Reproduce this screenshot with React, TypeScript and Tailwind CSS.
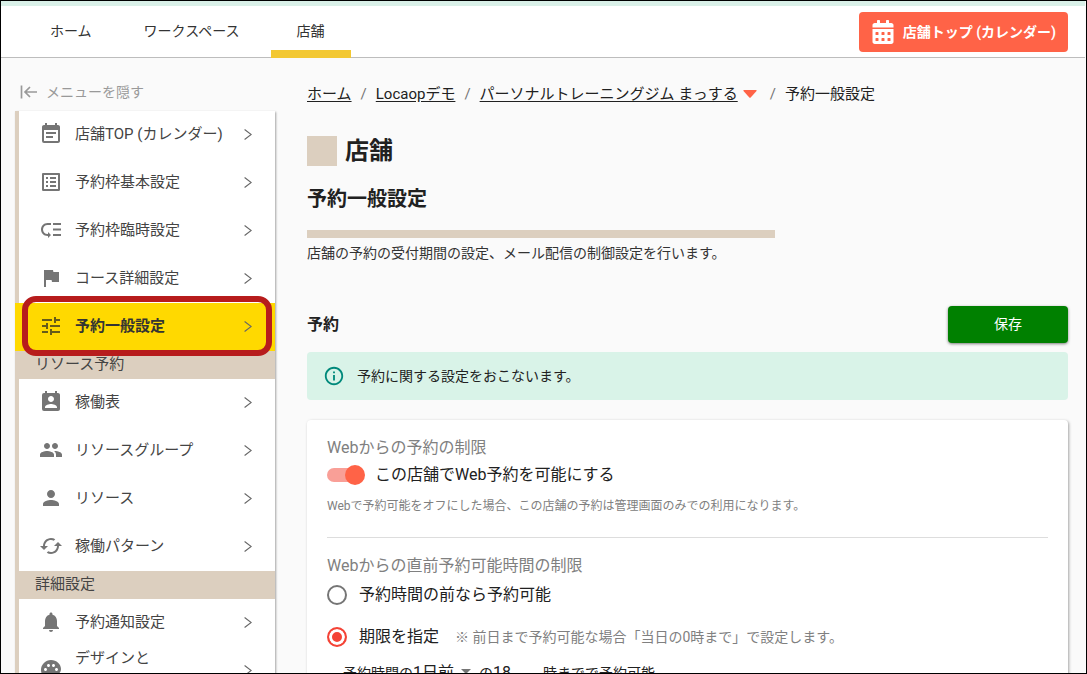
import React, { useState } from 'react';
import { FaCalendarAlt } from 'react-icons/fa';
import {
  MdCached,
  MdEventNote,
  MdFlag,
  MdInfoOutline,
  MdListAlt,
  MdLowPriority,
  MdNotifications,
  MdPalette,
  MdPeople,
  MdPermContactCalendar,
  MdPerson,
  MdTune,
} from 'react-icons/md';
import type { IconType } from 'react-icons';

interface MenuItem {
  label: string;
  icon: IconType;
  active?: boolean;
}

interface MenuSection {
  title?: string;
  items: MenuItem[];
}

const menu: MenuSection[] = [
  {
    items: [
      { label: '店舗TOP (カレンダー)', icon: MdEventNote },
      { label: '予約枠基本設定', icon: MdListAlt },
      { label: '予約枠臨時設定', icon: MdLowPriority },
      { label: 'コース詳細設定', icon: MdFlag },
      { label: '予約一般設定', icon: MdTune, active: true },
    ],
  },
  {
    title: 'リソース予約',
    items: [
      { label: '稼働表', icon: MdPermContactCalendar },
      { label: 'リソースグループ', icon: MdPeople },
      { label: 'リソース', icon: MdPerson },
      { label: '稼働パターン', icon: MdCached },
    ],
  },
  {
    title: '詳細設定',
    items: [
      { label: '予約通知設定', icon: MdNotifications },
      { label: 'デザインと\nカレンダー', icon: MdPalette },
    ],
  },
];

const Chevron = () => (
  <svg viewBox="0 0 8 12" className="h-3 w-2 shrink-0 text-[#666]" fill="none" stroke="currentColor">
    <path d="M0.6 1.5L7.2 6.5L0.6 11.5" strokeWidth="1.1" />
  </svg>
);

const CollapseIcon = () => (
  <svg viewBox="0 0 18 14" className="h-3.5 w-[18px]" fill="none" stroke="currentColor" strokeWidth="1.7">
    <path d="M1.5 0.5V13.5M17 7H5M10 2L5 7L10 12" />
  </svg>
);

const Header = () => (
  <header className="flex h-[52px] items-center justify-between border-b border-[#bdbdbd] bg-white pr-[17px]">
    <nav className="flex h-full pl-[17px] text-sm text-[#333]">
      <a href="#home" className="flex items-center px-8 pb-0.5">
        ホーム
      </a>
      <a href="#workspace" className="flex items-center pb-0.5 pl-5 pr-[31px]">
        ワークスペース
      </a>
      <a href="#shop" className="relative flex w-20 items-center justify-center pb-0.5">
        店舗
        <span className="absolute inset-x-0 -bottom-px h-2 bg-[#f3c832]" />
      </a>
    </nav>
    <a
      href="#calendar"
      className="flex h-10 items-center gap-2 rounded bg-[#ff6347] px-3 text-sm font-bold text-white"
    >
      <FaCalendarAlt className="h-6 w-6" />
      店舗トップ (カレンダー)
    </a>
  </header>
);

const Sidebar = () => (
  <aside className="w-[260px] shrink-0 pt-6">
    <button type="button" className="flex h-5 items-center gap-2 pl-[5px] text-sm text-[#999]">
      <CollapseIcon />
      メニューを隠す
    </button>
    <nav className="mt-[9px] border-l-4 border-[#dccfbf] bg-white shadow-[1px_1px_2px_rgba(0,0,0,0.35)]">
      {menu.map((section, i) => (
        <div key={i}>
          {section.title && (
            <h3 className="h-7 bg-[#dccfbf] pl-4 text-[15px] leading-[26px] text-[#444]">{section.title}</h3>
          )}
          <ul>
            {section.items.map((item) => (
              <li key={item.label} className="relative">
                <a
                  href="#menu"
                  className={`flex h-12 items-center pb-0.5 pl-5 pr-[23px] text-[15px] ${
                    item.active ? '-ml-1 bg-[#ffd900] pl-6 font-bold text-[#333]' : 'text-[#444]'
                  }`}
                >
                  <item.icon
                    className={`mr-3 h-6 w-6 shrink-0 ${item.active ? 'text-[#665c1a]' : 'text-[#757575]'}`}
                  />
                  <span className="grow whitespace-pre-line leading-6">{item.label}</span>
                  <Chevron />
                </a>
                {item.active && (
                  <span className="pointer-events-none absolute -top-[7px] left-[3px] z-10 h-[60px] w-[250px] rounded-[14px] border-6 border-[#b71c1c]" />
                )}
              </li>
            ))}
          </ul>
        </div>
      ))}
    </nav>
  </aside>
);

const Breadcrumb = () => (
  <nav className="flex items-center gap-[9px] text-[15px] leading-6 text-[#212121]">
    <a href="#home" className="underline underline-offset-2">
      ホーム
    </a>
    <span className="text-[#757575]">/</span>
    <a href="#demo" className="underline underline-offset-2">
      Locaopデモ
    </a>
    <span className="text-[#757575]">/</span>
    <a href="#gym" className="underline underline-offset-2">
      パーソナルトレーニングジム まっする
    </a>
    <svg viewBox="0 0 14 8" className="-ml-1 mr-1 h-2 w-3.5 text-[#ff6347]" fill="currentColor">
      <path d="M0.8 0H13.2Q14 0.3 13.5 1L7.7 7.5Q7 8 6.3 7.5L0.5 1Q0 0.3 0.8 0Z" />
    </svg>
    <span className="text-[#757575]">/</span>
    <span>予約一般設定</span>
  </nav>
);

const radioClass =
  'h-5 w-5 shrink-0 appearance-none rounded-full border-2 border-[#757575] checked:border-[#f44336] checked:bg-[#f44336] checked:shadow-[inset_0_0_0_3px_#fff]';

const ReservationCard = () => {
  const [webEnabled, setWebEnabled] = useState(true);
  const [limit, setLimit] = useState('deadline');

  return (
    <section className="mt-5 rounded bg-white px-5 pt-4 shadow-[1px_1px_3px_rgba(0,0,0,0.35)]">
      <h4 className="leading-6 text-[#808080]">Webからの予約の制限</h4>
      <label className="flex items-center gap-3 pt-px leading-7 text-[#212121]">
        <input
          type="checkbox"
          checked={webEnabled}
          onChange={(e) => setWebEnabled(e.target.checked)}
          className="relative h-3.5 w-9 appearance-none rounded-full bg-[#bdbdbd] before:absolute before:-top-[3px] before:left-0 before:h-5 before:w-5 before:rounded-full before:bg-white checked:bg-[#f99f97] checked:before:left-[18px] checked:before:bg-[#ff6347]"
        />
        この店舗でWeb予約を可能にする
      </label>
      <p className="mt-[7px] text-xs leading-5 text-[#808080]">
        Webで予約可能をオフにした場合、この店舗の予約は管理画面のみでの利用になります。
      </p>
      <hr className="mt-[21px] border-[#ddd]" />

      <h4 className="mt-4 leading-6 text-[#808080]">Webからの直前予約可能時間の制限</h4>
      <label className="mt-[3px] flex items-center gap-3 leading-7 text-[#212121]">
        <input
          type="radio"
          name="limit"
          checked={limit === 'before'}
          onChange={() => setLimit('before')}
          className={radioClass}
        />
        予約時間の前なら予約可能
      </label>
      <label className="mt-3.5 flex items-center gap-3 leading-7 text-[#212121]">
        <input
          type="radio"
          name="limit"
          checked={limit === 'deadline'}
          onChange={() => setLimit('deadline')}
          className={radioClass}
        />
        期限を指定
        <span className="ml-1 text-sm text-[#808080]">※ 前日まで予約可能な場合「当日の0時まで」で設定します。</span>
      </label>
      <div className="mt-2.5 flex items-center pl-4 text-sm leading-6 text-[#212121]">
        <label htmlFor="days">予約時間の</label>
        <div className="relative">
          <select id="days" className="w-[66px] appearance-none text-base outline-none">
            <option>1日前</option>
          </select>
          <svg viewBox="0 0 10 5" className="absolute right-2 top-2 h-[5px] w-2.5 text-[#757575]" fill="currentColor">
            <path d="M0 0H10L5 5Z" />
          </svg>
        </div>
        <label htmlFor="hour">の</label>
        <input id="hour" type="text" defaultValue="18" className="w-[50px] text-base outline-none" />
        <span>時までで予約可能</span>
      </div>
    </section>
  );
};

const App = () => {
  return (
    <div
      className="h-screen overflow-hidden border border-black bg-[#fafafa] pr-px text-[#212121]"
      style={{ fontFamily: 'Roboto, "Noto Sans CJK JP", sans-serif' }}
    >
      <div className="h-[5px] bg-[#d9f0e8]" />
      <Header />
      <div className="flex gap-8 pl-3.5 pr-[17px]">
        <Sidebar />
        <main className="min-w-0 grow pt-6">
          <Breadcrumb />
          <h1 className="mt-[27px] flex items-center gap-2 text-2xl font-bold leading-9">
            <span className="h-[30px] w-[30px] bg-[#dccfbf]" />
            店舗
          </h1>
          <h2 className="mt-3.5 text-xl font-bold leading-8">予約一般設定</h2>
          <div className="mt-[15px] h-2 w-[468px] max-w-full bg-[#dccfbf]" />
          <p className="mt-[3px] text-sm leading-6 text-[#333]">
            店舗の予約の受付期間の設定、メール配信の制御設定を行います。
          </p>

          <div className="mt-[41px] flex items-center justify-between">
            <h3 className="font-bold">予約</h3>
            <button
              type="button"
              className="h-[37px] w-[120px] rounded bg-[#008000] pb-0.5 text-sm text-white shadow-[0_1px_3px_rgba(0,0,0,0.5)]"
            >
              保存
            </button>
          </div>
          <div className="mt-[9px] flex h-12 items-center gap-3 rounded bg-[#d9f3e8] px-4 text-sm">
            <MdInfoOutline className="h-[22px] w-[22px] text-[#00897b]" />
            予約に関する設定をおこないます。
          </div>
          <ReservationCard />
        </main>
      </div>
    </div>
  );
};

export default App;
